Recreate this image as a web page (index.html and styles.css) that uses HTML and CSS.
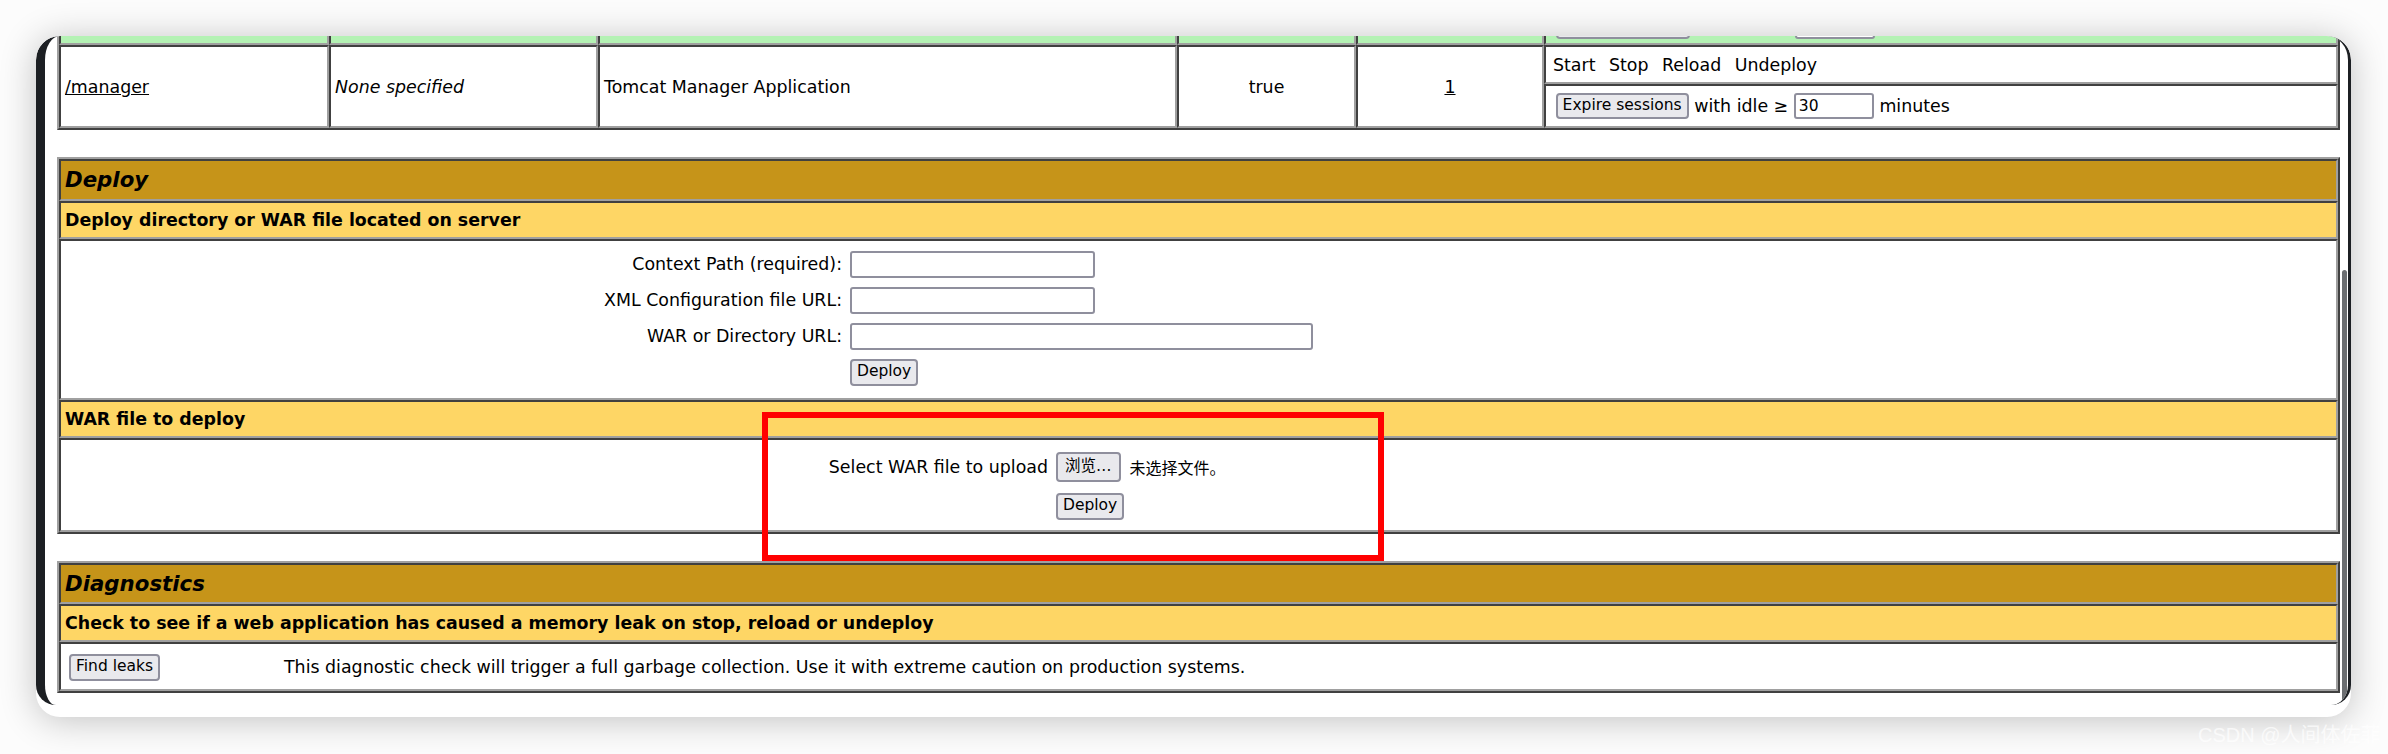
FILE: index.html
```html
<!DOCTYPE html>
<html lang="zh-CN">
<head>
<meta charset="utf-8">
<title>Tomcat Web Application Manager</title>
<link rel="stylesheet" href="styles.css">
</head>
<body>
<div class="frame">
  <div class="screen">
    <div class="page">
      <table class="grid apps">
        <colgroup>
          <col class="c-path"><col class="c-version"><col class="c-name"><col class="c-running"><col class="c-sessions"><col>
        </colgroup>
        <tr class="row-green">
          <td></td><td></td><td></td><td></td><td></td>
          <td>
            <div class="expire expire-low">
              <button class="btn btn-expire btn-blank" aria-label="Expire sessions"></button>
              <span class="idle-gap"></span>
              <input class="field idle" type="text" aria-label="idle">
            </div>
          </td>
        </tr>
        <tr>
          <td rowspan="2"><a class="link" href="#">/manager</a></td>
          <td rowspan="2"><i>None specified</i></td>
          <td rowspan="2">Tomcat Manager Application</td>
          <td rowspan="2" class="center">true</td>
          <td rowspan="2" class="center"><a class="link" href="#">1</a></td>
          <td>
            <div class="commands"><span>Start</span><span>Stop</span><span>Reload</span><span>Undeploy</span></div>
          </td>
        </tr>
        <tr>
          <td>
            <div class="expire">
              <button class="btn btn-expire">Expire sessions</button>
              <span>with idle ≥</span>
              <input class="field idle" type="text" value="30">
              <span>minutes</span>
            </div>
          </td>
        </tr>
      </table>

      <table class="grid section">
        <tr><td class="title"><div class="title-text">Deploy</div></td></tr>
        <tr><td class="header"><div class="header-text">Deploy directory or WAR file located on server</div></td></tr>
        <tr>
          <td class="content">
            <div class="form-grid server">
              <div class="lbl">Context Path (required):</div>
              <div class="ctl"><input class="field w20" type="text"></div>
              <div class="lbl">XML Configuration file URL:</div>
              <div class="ctl"><input class="field w20" type="text"></div>
              <div class="lbl">WAR or Directory URL:</div>
              <div class="ctl"><input class="field w40" type="text"></div>
              <div class="lbl"></div>
              <div class="ctl"><button class="btn btn-deploy">Deploy</button></div>
            </div>
          </td>
        </tr>
        <tr><td class="header"><div class="header-text">WAR file to deploy</div></td></tr>
        <tr>
          <td class="content">
            <div class="form-grid upload">
              <div class="lbl">Select WAR file to upload</div>
              <div class="ctl"><button class="btn browse">浏览…</button><span class="nofile">未选择文件。</span></div>
              <div class="lbl"></div>
              <div class="ctl"><button class="btn btn-deploy">Deploy</button></div>
            </div>
          </td>
        </tr>
      </table>

      <table class="grid section">
        <tr><td class="title"><div class="title-text short">Diagnostics</div></td></tr>
        <tr><td class="header"><div class="header-text">Check to see if a web application has caused a memory leak on stop, reload or undeploy</div></td></tr>
        <tr>
          <td class="content">
            <div class="form-grid diag">
              <div class="ctl"><button class="btn btn-deploy">Find leaks</button></div>
              <div class="ctl">This diagnostic check will trigger a full garbage collection. Use it with extreme caution on production systems.</div>
            </div>
          </td>
        </tr>
      </table>
    </div>
    <div class="thumb"></div>
  </div>
  <div class="redbox"></div>
</div>
<div class="watermark">CSDN @人间体佐菲</div>
</body>
</html>
```

FILE: styles.css
```css
* { box-sizing: border-box; }

html, body { margin: 0; }

body {
  position: relative;
  width: 2388px;
  height: 754px;
  overflow: hidden;
  padding: 36px 0 0 36px;
  background: #fcfcfc;
  font-family: "DejaVu Sans", "Noto Sans CJK SC", sans-serif;
  font-size: 17.4px;
  color: #000;
}

.frame {
  position: relative;
  width: 2315px;
  height: 681px;
  background: #fff;
  border-radius: 24px;
  box-shadow: 0 3px 36px rgba(0, 0, 0, 0.24);
  overflow: hidden;
}

.screen {
  position: relative;
  height: 669px;
  border-left: 9px solid #1c1f23;
  border-right: 3px solid #1c1f23;
  border-radius: 24px 24px 20px 20px;
  overflow: hidden;
  background: #fff;
}

.page {
  padding: 0 8px 0 12px;
}

.grid {
  width: 100%;
  table-layout: fixed;
  border-collapse: separate;
  border-spacing: 0;
  border-style: solid;
  border-width: 2px;
  border-color: #a0a0a0 #404040 #404040 #a0a0a0;
}

.grid td {
  padding: 0 4px;
  border-style: solid;
  border-width: 2px;
  border-color: #404040 #a0a0a0 #a0a0a0 #404040;
  vertical-align: middle;
  white-space: nowrap;
  overflow: hidden;
}

.apps { margin-top: -37px; }
.section { margin-top: 27px; }

.c-path { width: 270px; }
.c-version { width: 269px; }
.c-name { width: 579px; }
.c-running { width: 179px; }
.c-sessions { width: 188px; }

.row-green td { background: #b4f2b4; }

.center { text-align: center; }

.link { color: #000; text-decoration: underline; }

.commands {
  display: flex;
  align-items: center;
  height: 35px;
  padding-left: 3px;
  gap: 13.5px;
}

.expire {
  display: flex;
  align-items: center;
  height: 40px;
  padding-left: 5.6px;
  gap: 5.6px;
}

.expire-low {
  align-items: flex-end;
  padding-bottom: 4px;
}

.btn {
  display: inline-flex;
  align-items: center;
  justify-content: center;
  height: 27px;
  margin: 0;
  padding: 0 5px;
  border: 2px solid #8f8f9d;
  border-radius: 4px;
  background: #e9e9ed;
  color: #000;
  font-family: "DejaVu Sans", "Noto Sans CJK SC", sans-serif;
  font-size: 15.5px;
  line-height: 1;
  white-space: nowrap;
}

.btn-expire { height: 26px; }

.btn-blank { width: 134px; }

.idle-gap { width: 94px; }

.browse {
  height: 30px;
  padding: 0 7px;
}

.field {
  height: 27px;
  margin: 0;
  padding: 0 3px;
  border: 2px solid #8f8f9d;
  border-radius: 3px;
  background: #fff;
  font-family: "DejaVu Sans", sans-serif;
  font-size: 15.5px;
  color: #000;
}

.idle { width: 80px; height: 26px; }
.w20 { width: 245px; }
.w40 { width: 463px; }

.title { background: #c69419; }

.title-text {
  height: 38px;
  line-height: 38px;
  font-size: 21.3px;
  font-weight: bold;
  font-style: italic;
}

.title-text.short {
  height: 37px;
  line-height: 37px;
}

.header { background: #fed665; }

.header-text {
  height: 34px;
  line-height: 34px;
  font-weight: bold;
}

.form-grid { display: grid; }

.server {
  grid-template-columns: 781px 1fr;
  grid-auto-rows: 36px;
  padding: 5px 0 8px;
}

.upload {
  grid-template-columns: 987px 1fr;
  grid-template-rows: 43px 36px;
  padding: 5px 0 6px;
}

.diag {
  grid-template-columns: 215px 1fr;
  grid-template-rows: 36px;
  padding: 5px 0 4px;
}

.lbl {
  align-self: center;
  text-align: right;
  padding-right: 4px;
}

.ctl {
  display: flex;
  align-items: center;
  gap: 9px;
  padding-left: 4px;
}

.nofile {
  font-size: 16px;
  font-family: "DejaVu Sans", "Noto Sans CJK SC", sans-serif;
}

.thumb {
  position: absolute;
  right: 1px;
  top: 234px;
  bottom: 2px;
  width: 5px;
  border-radius: 3px;
  background: #6b6e71;
}

.redbox {
  position: absolute;
  left: 726px;
  top: 376px;
  width: 622px;
  height: 149px;
  border: 6px solid #ff0000;
}

.watermark {
  position: absolute;
  left: 2198px;
  top: 719px;
  font-family: "Liberation Sans", "Noto Sans CJK SC", sans-serif;
  font-size: 20px;
  color: rgba(255, 255, 255, 0.7);
  white-space: nowrap;
}
```
